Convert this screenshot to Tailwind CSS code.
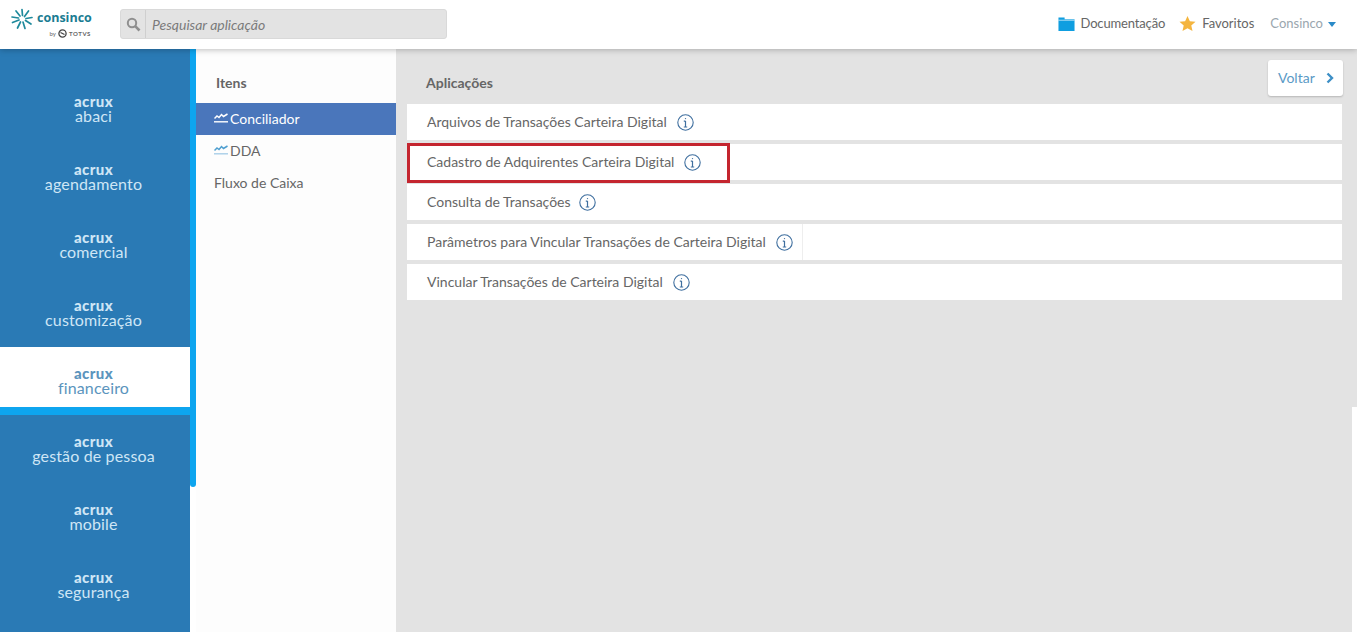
<!DOCTYPE html>
<html lang="pt-BR">
<head>
    <meta charset="UTF-8">
    <title>Consinco</title>
    <script src="https://cdn.jsdelivr.net/npm/@tailwindcss/browser@4"></script>
</head>
<body class="h-[632px] overflow-hidden bg-white font-['Lato','Liberation_Sans',sans-serif]">
    <!-- Header -->
    <header class="relative z-10 h-[49px] flex items-center bg-white shadow-[0_1px_6px_rgba(0,0,0,0.25)]">
        <div class="w-[120px] h-full shrink-0 pl-[11px] pt-[8px]">
            <div class="flex items-center gap-[4px] h-[21px]">
                <svg width="22" height="22" viewBox="0 0 22 22" fill="none" stroke="#1f8a9c" stroke-width="1.7" stroke-linecap="round">
                    <path d="M11 1.5 L11.5 7.5 M17.5 3 L13.5 8.5 M21 9.5 L15 10.5 M20 16 L14.5 12.5 M14 20.5 L12 14 M6.5 20 L9.5 14 M1.5 14.5 L8 12 M1 9 L7.5 10 M5 3 L9 8"/>
                </svg>
                <span class="text-[12.5px] leading-none font-bold text-[#1a7c92] font-['Open_Sans',sans-serif]">consinco</span>
            </div>
            <div class="flex items-center justify-end w-[80px] gap-[2px] text-[6px] leading-none text-[#666]">
                <span>by</span>
                <svg width="9" height="9" viewBox="0 0 9 9" fill="none" stroke="#444" stroke-width="1.3"><circle cx="4.5" cy="4.5" r="3.6"/><path d="M2.5 3.5 L6.5 5.5"/></svg>
                <span class="font-bold tracking-[0.6px]">TOTVS</span>
            </div>
        </div>
        <div class="w-[327px] h-[30px] mb-[1px] flex items-center bg-[#e3e3e3] border border-[#d9d9d9] rounded-[3px]">
            <div class="w-[25px] h-full flex items-center justify-center border-r border-[#cfcfcf]">
                <svg width="15" height="15" viewBox="0 0 15 15" fill="none" stroke="#8f8f8f" stroke-width="2"><circle cx="6" cy="6" r="4.2"/><path d="M9.2 9.2 L13.5 13.5" stroke-width="2.6"/></svg>
            </div>
            <span class="ml-[6px] text-[14px] italic text-[#7b7b7b]">Pesquisar aplicação</span>
        </div>
        <nav class="ml-auto mb-[2px] pr-[21px] flex items-center text-[13px] text-[#666]">
            <svg width="17" height="16" viewBox="0 0 18 16" class="mr-[5px]"><path d="M0.5 1 H7 V3 H17.5 V15.5 H0.5 Z" fill="#0f9ee0"/><path d="M0.5 4 H17.5" stroke="#fff" stroke-width="0.7"/></svg>
            <span class="tracking-[-0.15px]">Documentação</span>
            <svg width="17" height="17" viewBox="0 0 18 17" class="ml-[14px] mr-[6px]"><path d="M9 0.5 L11.5 6 L17.5 6.6 L13 10.6 L14.3 16.5 L9 13.4 L3.7 16.5 L5 10.6 L0.5 6.6 L6.5 6 Z" fill="#f4b53f"/></svg>
            <span>Favoritos</span>
            <span class="ml-[16px] text-[#9aa6ae]">Consinco</span>
            <svg width="8" height="5" viewBox="0 0 8 5" class="ml-[5px] mt-[2px]"><path d="M0 0 H8 L4 5 Z" fill="#2a8ac8"/></svg>
        </nav>
    </header>

    <div class="flex h-[583px]">
        <!-- Sidebar -->
        <aside class="w-[196px] shrink-0 flex bg-white">
            <ul class="w-[190px] h-full bg-[#2a7ab5] pt-[26px] pr-[3px] text-center text-[#cfe6f5]">
                <li class="h-[68px] pt-[19px]"><p class="text-[15px] leading-[15px] font-black tracking-[0.4px]">acrux</p><p class="text-[16px] leading-[13px] tracking-[0.15px]">abaci</p></li>
                <li class="h-[68px] pt-[19px]"><p class="text-[15px] leading-[15px] font-black tracking-[0.4px]">acrux</p><p class="text-[16px] leading-[13px] tracking-[0.15px]">agendamento</p></li>
                <li class="h-[68px] pt-[19px]"><p class="text-[15px] leading-[15px] font-black tracking-[0.4px]">acrux</p><p class="text-[16px] leading-[13px] tracking-[0.15px]">comercial</p></li>
                <li class="h-[68px] pt-[19px]"><p class="text-[15px] leading-[15px] font-black tracking-[0.4px]">acrux</p><p class="text-[16px] leading-[13px] tracking-[0.15px]">customização</p></li>
                <li class="h-[68px] pt-[19px] mr-[-3px] pr-[3px] bg-white border-b-8 border-[#0ea5ef] text-[#5b94bd]"><p class="text-[15px] leading-[15px] font-black tracking-[0.4px]">acrux</p><p class="text-[16px] leading-[13px] tracking-[0.15px]">financeiro</p></li>
                <li class="h-[68px] pt-[19px]"><p class="text-[15px] leading-[15px] font-black tracking-[0.4px]">acrux</p><p class="text-[16px] leading-[13px] tracking-[0.15px]">gestão de pessoa</p></li>
                <li class="h-[68px] pt-[19px]"><p class="text-[15px] leading-[15px] font-black tracking-[0.4px]">acrux</p><p class="text-[16px] leading-[13px] tracking-[0.15px]">mobile</p></li>
                <li class="h-[68px] pt-[19px]"><p class="text-[15px] leading-[15px] font-black tracking-[0.4px]">acrux</p><p class="text-[16px] leading-[13px] tracking-[0.15px]">segurança</p></li>
            </ul>
            <div class="w-[6px] h-[438px] bg-[#0ea5ef] rounded-b-[3px]"></div>
        </aside>

        <!-- Itens -->
        <section class="w-[200px] shrink-0 bg-[#fdfdfd] pt-[26px] text-[14px] text-[#666]">
            <h2 class="pl-[20px] h-[28px] leading-[16px] font-bold">Itens</h2>
            <a class="h-[32px] pb-[2px] flex items-center pl-[18px] bg-[#4a76bb] text-white">
                <svg width="14" height="10" viewBox="0 0 14 10" fill="none" stroke="#fff" class="mr-[2px]"><path d="M0.5 5.5 L3 3 L5 4.5 L7.5 1.5 L9.5 3.5 L13.5 1" stroke-width="1.5"/><path d="M0 8.8 H14" stroke-width="1.4"/></svg>
                Conciliador
            </a>
            <a class="h-[32px] pb-[2px] flex items-center pl-[18px]">
                <svg width="14" height="10" viewBox="0 0 14 10" fill="none" class="mr-[2px]"><path d="M0.5 5.5 L3 3 L5 4.5 L7.5 1.5 L9.5 3.5 L13.5 1" stroke="#4f9fd0" stroke-width="1.5"/><path d="M0 8.8 H14" stroke="#a9cfe8" stroke-width="1.4"/></svg>
                DDA
            </a>
            <a class="h-[33px] pb-[2px] flex items-center pl-[18px]">Fluxo de Caixa</a>
        </section>

        <!-- Aplicacoes -->
        <main class="relative flex-1 bg-[#e3e3e3] pl-[11px] pr-[15px] pt-[26px] text-[14px] text-[#666]">
            <div class="h-[29px] pl-[19px] leading-[16px] font-bold">Aplicações</div>
            <a class="absolute right-[14px] top-[11px] w-[75px] h-[36px] flex items-center justify-between pl-[10px] pr-[9px] pb-[1px] bg-white rounded-[3px] shadow-[0_1px_2px_rgba(0,0,0,0.2)] text-[#5b9ac6]">
                Voltar
                <svg width="8" height="12" viewBox="0 0 8 12" fill="none" stroke="#3d8fc6" stroke-width="2.4"><path d="M1.5 1.5 L6 6 L1.5 10.5"/></svg>
            </a>
            <ul class="flex flex-col gap-[4px]">
                <li class="h-[36px] pb-[2px] bg-white flex items-center pl-[20px]">
                    Arquivos de Transações Carteira Digital
                    <svg width="17" height="17" viewBox="0 0 17 17" fill="none" stroke="#3f6f9f" class="ml-[10px] mt-[2px]"><circle cx="8.5" cy="8.5" r="7.7" stroke-width="1.1"/><path d="M8.5 7 V13 M6.8 7.2 H8.5 M6.8 13 H10.2" stroke-width="1.2"/><circle cx="8.5" cy="4.6" r="0.7" fill="#3f6f9f" stroke="none"/></svg>
                </li>
                <li class="relative h-[36px] pb-[2px] bg-white flex items-center pl-[20px]">
                    Cadastro de Adquirentes Carteira Digital
                    <svg width="17" height="17" viewBox="0 0 17 17" fill="none" stroke="#3f6f9f" class="ml-[10px] mt-[2px]"><circle cx="8.5" cy="8.5" r="7.7" stroke-width="1.1"/><path d="M8.5 7 V13 M6.8 7.2 H8.5 M6.8 13 H10.2" stroke-width="1.2"/><circle cx="8.5" cy="4.6" r="0.7" fill="#3f6f9f" stroke="none"/></svg>
                    <div class="absolute left-0 top-[-1px] w-[323px] h-[40px] border-[3px] border-[#c4252f]"></div>
                </li>
                <li class="h-[36px] pb-[2px] bg-white flex items-center pl-[20px]">
                    Consulta de Transações
                    <svg width="17" height="17" viewBox="0 0 17 17" fill="none" stroke="#3f6f9f" class="ml-[8px] mt-[2px]"><circle cx="8.5" cy="8.5" r="7.7" stroke-width="1.1"/><path d="M8.5 7 V13 M6.8 7.2 H8.5 M6.8 13 H10.2" stroke-width="1.2"/><circle cx="8.5" cy="4.6" r="0.7" fill="#3f6f9f" stroke="none"/></svg>
                </li>
                <li class="h-[36px] bg-white flex items-center">
                    <div class="h-full pb-[2px] flex items-center pl-[20px] pr-[9px] border-r border-[#eeeeee]">
                        Parâmetros para Vincular Transações de Carteira Digital
                        <svg width="17" height="17" viewBox="0 0 17 17" fill="none" stroke="#3f6f9f" class="ml-[10px] mt-[2px]"><circle cx="8.5" cy="8.5" r="7.7" stroke-width="1.1"/><path d="M8.5 7 V13 M6.8 7.2 H8.5 M6.8 13 H10.2" stroke-width="1.2"/><circle cx="8.5" cy="4.6" r="0.7" fill="#3f6f9f" stroke="none"/></svg>
                    </div>
                </li>
                <li class="h-[36px] pb-[2px] bg-white flex items-center pl-[20px]">
                    Vincular Transações de Carteira Digital
                    <svg width="17" height="17" viewBox="0 0 17 17" fill="none" stroke="#3f6f9f" class="ml-[10px] mt-[2px]"><circle cx="8.5" cy="8.5" r="7.7" stroke-width="1.1"/><path d="M8.5 7 V13 M6.8 7.2 H8.5 M6.8 13 H10.2" stroke-width="1.2"/><circle cx="8.5" cy="4.6" r="0.7" fill="#3f6f9f" stroke="none"/></svg>
                </li>
            </ul>
            <div class="absolute right-0 top-[358px] bottom-0 w-[5px] bg-white"></div>
        </main>
    </div>
</body>
</html>
